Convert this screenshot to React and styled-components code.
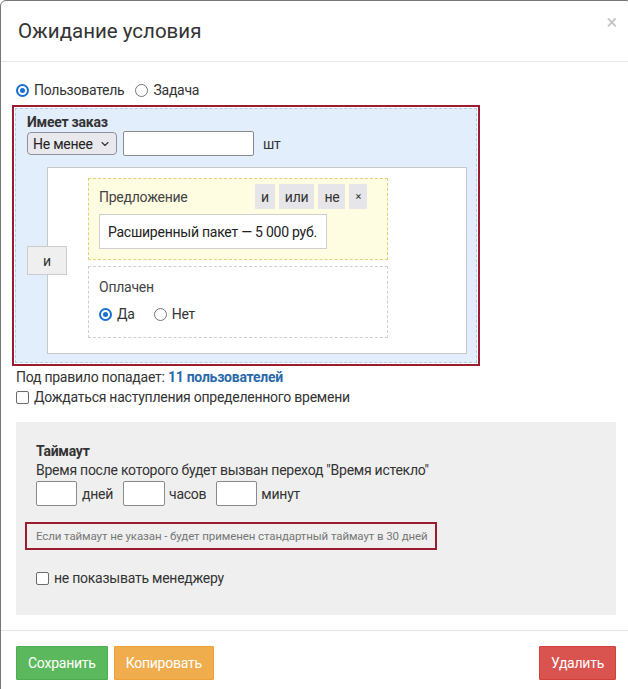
import styled, { createGlobalStyle } from "styled-components";
import { ChevronDown } from "lucide-react";

const GlobalStyle = createGlobalStyle`
  body {
    margin: 0;
    overflow: hidden;
    background: #fff;
    font-family: Roboto, "Liberation Sans", Arial, sans-serif;
    font-size: 14px;
    letter-spacing: -0.25px;
    color: #333;
  }
  * {
    box-sizing: border-box;
  }
`;

const Modal = styled.div`
  width: 632px;
  border: 1px solid #777;
  border-radius: 6px;
  background: #fff;
`;

const Header = styled.div`
  height: 61px;
  padding: 0 14px 0 17px;
  border-bottom: 1px solid #e5e5e5;
  display: flex;
  align-items: center;
  justify-content: space-between;
`;

const Title = styled.h4`
  margin: 0;
  font-size: 20.5px;
  font-weight: 400;
  letter-spacing: 0;
  color: #333;
`;

const Close = styled.span`
  align-self: flex-start;
  margin-top: 9px;
  font-size: 20px;
  line-height: 24px;
  color: #c4c4c4;
`;

const Body = styled.div`
  padding: 17px 15px 15px;
`;

const InlineRow = styled.div`
  display: flex;
  align-items: center;
  height: ${(p) => p.$h || 22}px;
  gap: ${(p) => p.$gap || 0}px;
`;

const Option = styled.label`
  display: inline-flex;
  align-items: center;
  gap: 5px;
  margin-right: ${(p) => p.$mr || 0}px;
  color: #333;
`;

const Radio = styled.span`
  width: 13px;
  height: 13px;
  border-radius: 50%;
  background: #fff;
  border: ${(p) => (p.$checked ? "2px solid #1a6fd6" : "1.5px solid #767676")};
  display: inline-flex;
  align-items: center;
  justify-content: center;

  &::after {
    content: "";
    width: 5px;
    height: 5px;
    border-radius: 50%;
    background: ${(p) => (p.$checked ? "#1a6fd6" : "transparent")};
  }
`;

const Checkbox = styled.span`
  width: 13px;
  height: 13px;
  border: 1.5px solid #6b6b6b;
  border-radius: 2px;
  background: #fff;
`;

const Highlight = styled.div`
  width: 468px;
  margin: 4px 0 0 -4px;
  border: 2px solid #9b1b30;
  padding: 1px;
`;

const RuleBox = styled.div`
  background: #e2eefb;
  border: 1px dashed #b6cbe6;
  padding: 5px 9px 8px 11px;
`;

const RuleTitle = styled.div`
  font-weight: 700;
  line-height: 17px;
  color: #333;
`;

const FakeSelect = styled.div`
  width: 90px;
  height: 23px;
  padding: 0 5px;
  border: 1px solid #8f8f9d;
  border-radius: 4px;
  background: #e9e9ed;
  display: flex;
  align-items: center;
  justify-content: space-between;
  color: #222;
`;

const Input = styled.div`
  width: ${(p) => p.$w}px;
  height: 25px;
  border: 1px solid #8a8a8a;
  border-radius: 2px;
  background: #fff;
`;

const Unit = styled.span`
  margin-left: ${(p) => p.$ml || 0}px;
  color: #333;
`;

const GroupRow = styled.div`
  margin-top: 11px;
  display: flex;
  align-items: center;
`;

const JoinButton = styled.div`
  position: relative;
  z-index: 1;
  width: 40px;
  height: 29px;
  margin-right: -20px;
  border: 1px solid #ccc;
  background: #efefef;
  display: flex;
  align-items: center;
  justify-content: center;
  color: #333;
`;

const GroupBox = styled.div`
  flex: 1;
  background: #fff;
  border: 1px solid #c8c8c8;
  padding: 10px 0 15px 40px;
  display: flex;
  flex-direction: column;
  gap: 6px;
`;

const Condition = styled.div`
  width: 300px;
  border: 1px dashed ${(p) => (p.$active ? "#e4cf7f" : "#cfcfcf")};
  background: ${(p) => (p.$active ? "#fffde1" : "#fff")};
  padding: ${(p) => (p.$active ? "5px 20px 10px 10px" : "10px 10px 13px")};
`;

const ConditionHead = styled.div`
  display: flex;
  align-items: center;
  gap: 4px;
`;

const ConditionName = styled.span`
  flex: 1;
  color: #444;
  line-height: 20px;
`;

const OpButton = styled.span`
  height: 25px;
  padding: 0 ${(p) => (p.$small ? 6 : 6)}px;
  background: #e6e6ea;
  display: flex;
  align-items: center;
  font-size: ${(p) => (p.$small ? 11 : 14)}px;
  color: #333;
`;

const Value = styled.div`
  margin-top: 5px;
  width: 228px;
  height: 35px;
  padding: 0 6px 0 8px;
  border: 1px solid #cfcfcf;
  background: #fff;
  display: flex;
  align-items: center;
  white-space: nowrap;
  color: #222;
`;

const Summary = styled.div`
  margin-top: 2px;
  line-height: 18px;
  color: #333;
`;

const Link = styled.a`
  color: #2a6aab;
  font-weight: 700;
  text-decoration: none;
`;

const Panel = styled.div`
  margin-top: 14px;
  background: #efefef;
  padding: 20px 20px 26px;
`;

const PanelTitle = styled.div`
  font-weight: 700;
  line-height: 18px;
`;

const Text = styled.div`
  line-height: 21px;
  color: #333;
`;

const Hint = styled.div`
  margin: 16px 0 0 -11px;
  width: 412px;
  height: 28px;
  border: 2px solid #9b1b30;
  padding-left: 9px;
  display: flex;
  align-items: center;
  font-size: 11.5px;
  letter-spacing: -0.1px;
  color: #777;
`;

const Footer = styled.div`
  border-top: 1px solid #e5e5e5;
  padding: 15px 15px 30px;
  display: flex;
  gap: 6px;
`;

const colors = {
  success: ["#5cb85c", "#4cae4c"],
  warning: ["#f0ad4e", "#eea236"],
  danger: ["#d9534f", "#d43f3a"],
};

const Button = styled.button`
  height: 34px;
  padding: 0 11px;
  margin-left: ${(p) => (p.$push ? "auto" : "0")};
  border: 1px solid ${(p) => colors[p.$variant][1]};
  border-radius: 1px;
  background: ${(p) => colors[p.$variant][0]};
  color: #fff;
  font-family: inherit;
  font-size: 14px;
  letter-spacing: -0.25px;
`;

function App() {
  return (
    <>
      <GlobalStyle />
      <Modal>
        <Header>
          <Title>Ожидание условия</Title>
          <Close>×</Close>
        </Header>
        <Body>
          <InlineRow>
            <Option $mr={11}>
              <Radio $checked />
              Пользователь
            </Option>
            <Option>
              <Radio />
              Задача
            </Option>
          </InlineRow>

          <Highlight>
            <RuleBox>
              <RuleTitle>Имеет заказ</RuleTitle>
              <InlineRow $h={25} $gap={6}>
                <FakeSelect>
                  Не менее
                  <ChevronDown size={12} strokeWidth={2.2} color="#333" />
                </FakeSelect>
                <Input $w={131} />
                <Unit $ml={3}>шт</Unit>
              </InlineRow>
              <GroupRow>
                <JoinButton>и</JoinButton>
                <GroupBox>
                  <Condition $active>
                    <ConditionHead>
                      <ConditionName>Предложение</ConditionName>
                      <OpButton>и</OpButton>
                      <OpButton>или</OpButton>
                      <OpButton>не</OpButton>
                      <OpButton $small>×</OpButton>
                    </ConditionHead>
                    <Value>Расширенный пакет — 5 000 руб.</Value>
                  </Condition>
                  <Condition>
                    <ConditionName>Оплачен</ConditionName>
                    <InlineRow $h={20} style={{ marginTop: 7 }}>
                      <Option $mr={19}>
                        <Radio $checked />
                        Да
                      </Option>
                      <Option>
                        <Radio />
                        Нет
                      </Option>
                    </InlineRow>
                  </Condition>
                </GroupBox>
              </GroupRow>
            </RuleBox>
          </Highlight>

          <Summary>
            Под правило попадает: <Link href="#">11 пользователей</Link>
          </Summary>
          <InlineRow>
            <Option>
              <Checkbox />
              Дождаться наступления определенного времени
            </Option>
          </InlineRow>

          <Panel>
            <PanelTitle>Таймаут</PanelTitle>
            <Text>Время после которого будет вызван переход "Время истекло"</Text>
            <InlineRow $h={25}>
              <Input $w={41} />
              <Unit $ml={5}>дней</Unit>
              <Input $w={42} style={{ marginLeft: 10 }} />
              <Unit $ml={4}>часов</Unit>
              <Input $w={41} style={{ marginLeft: 10 }} />
              <Unit $ml={4}>минут</Unit>
            </InlineRow>
            <Hint>Если таймаут не указан - будет применен стандартный таймаут в 30 дней</Hint>
            <InlineRow style={{ marginTop: 17 }}>
              <Option>
                <Checkbox />
                не показывать менеджеру
              </Option>
            </InlineRow>
          </Panel>
        </Body>
        <Footer>
          <Button $variant="success">Сохранить</Button>
          <Button $variant="warning">Копировать</Button>
          <Button $variant="danger" $push>
            Удалить
          </Button>
        </Footer>
      </Modal>
    </>
  );
}

export default App;
